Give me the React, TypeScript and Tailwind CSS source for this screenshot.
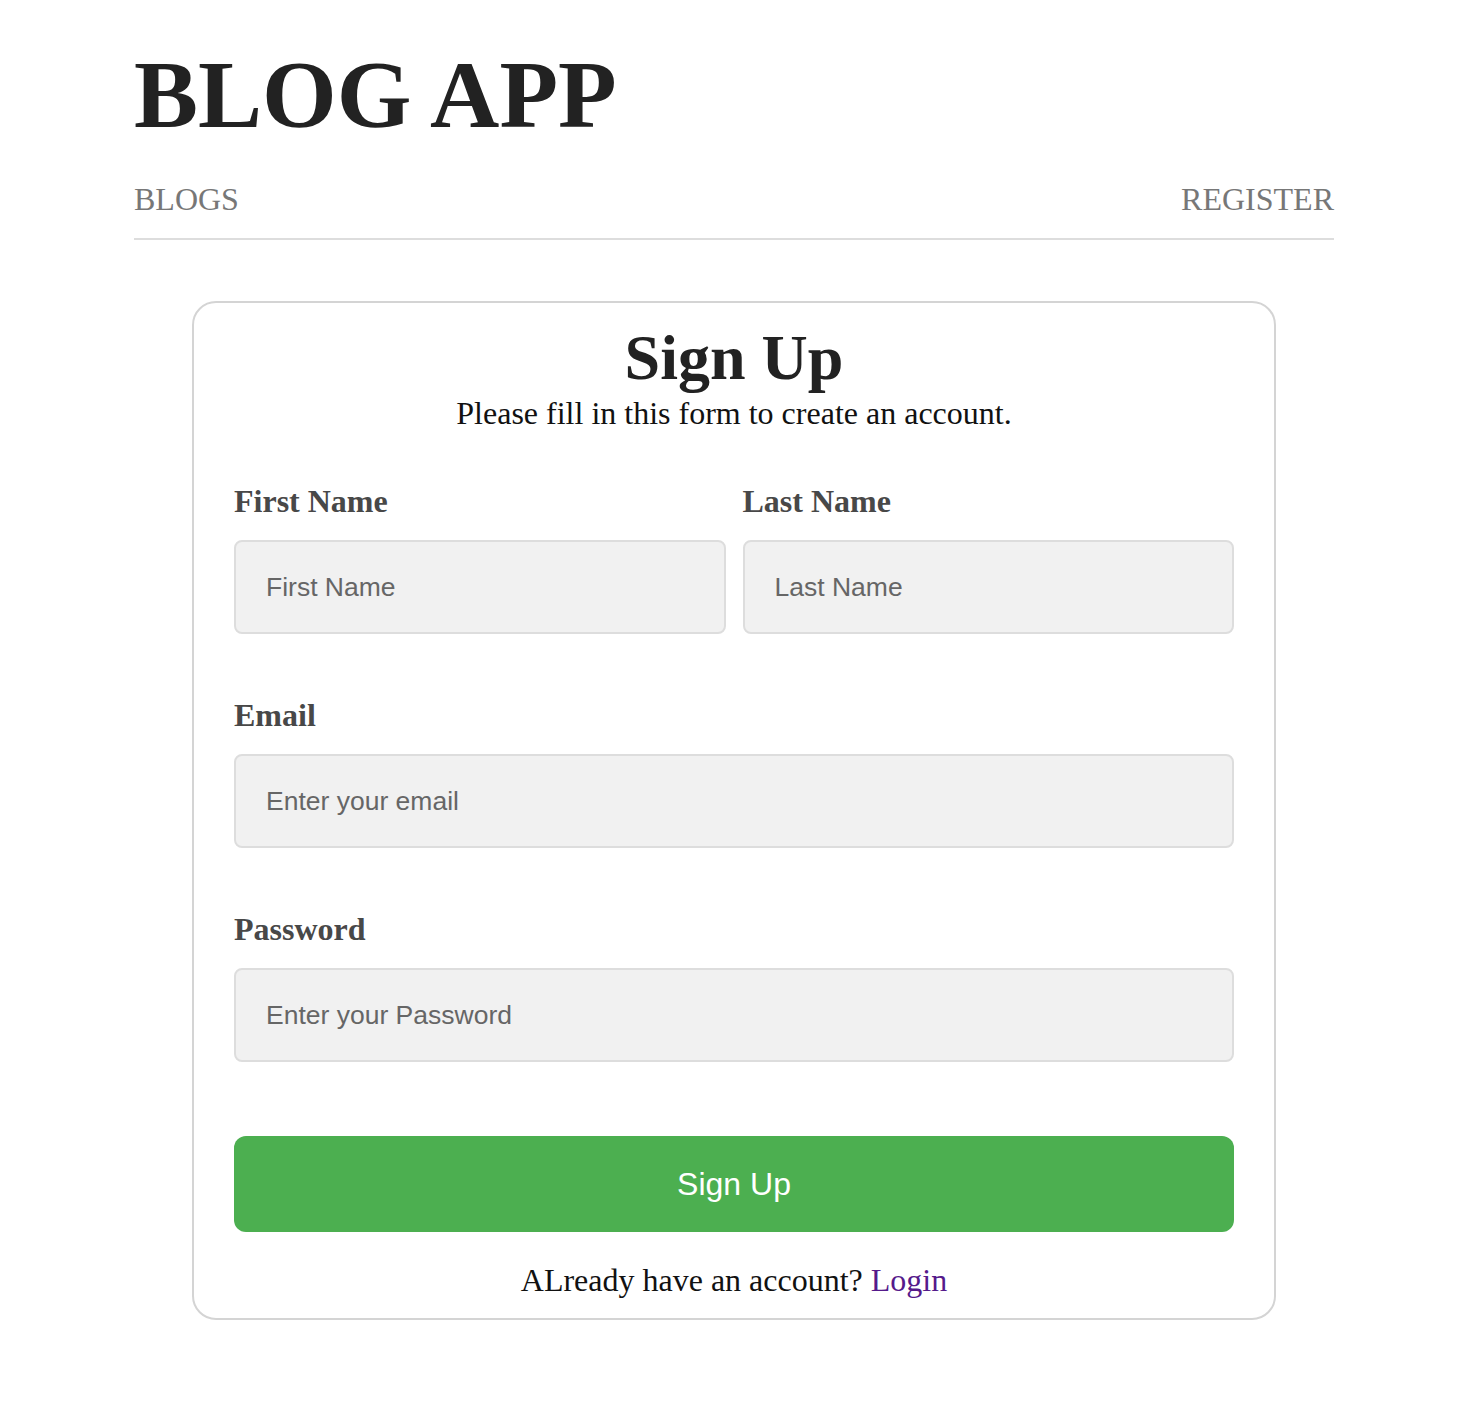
import React from "react";

const serif = "font-['Liberation_Serif','Times_New_Roman',serif]";
const sans = "font-['Liberation_Sans',Arial,sans-serif]";

function Field({ label, placeholder, type = "text" }: { label: string; placeholder: string; type?: string }) {
  return (
    <div className="flex flex-col">
      <label className={`${serif} text-[32px] leading-none font-bold text-[#484848]`}>{label}</label>
      <input
        type={type}
        placeholder={placeholder}
        className={`${sans} mt-[23px] h-[94px] w-full rounded-[8px] border-2 border-[#dddddd] bg-[#f1f1f1] px-[30px] text-[26.5px] text-[#333] placeholder:text-[#666] outline-none`}
      />
    </div>
  );
}

export default function App() {
  return (
    <div className={`min-h-screen bg-white ${serif}`}>
      <div className="mx-auto w-[1200px] pt-[47px] pb-[80px]">
        {/* Header */}
        <h1 className="text-[96px] leading-none font-bold text-[#222]">BLOG APP</h1>
        <nav className="mt-[40px] flex justify-between border-b-2 border-[#dddddd] pb-[23px] text-[32px] leading-none text-[#777]">
          <a href="#">BLOGS</a>
          <a href="#">REGISTER</a>
        </nav>

        {/* Sign up card */}
        <div className="mx-auto mt-[61px] w-[1084px] rounded-[24px] border-2 border-[#d4d4d4] px-[40px] pt-[23px] pb-[22px]">
          <div className="text-center">
            <h2 className="text-[64px] leading-none font-bold text-[#222]">Sign Up</h2>
            <p className="mt-[7px] text-[32px] leading-none text-[#111]">Please fill in this form to create an account.</p>
          </div>

          <form className="mt-[56px] flex flex-col gap-[65px]" onSubmit={e => e.preventDefault()}>
            <div className="grid grid-cols-2 gap-x-[17px]">
              <Field label="First Name" placeholder="First Name" />
              <Field label="Last Name" placeholder="Last Name" />
            </div>
            <Field label="Email" placeholder="Enter your email" type="email" />
            <Field label="Password" placeholder="Enter your Password" type="password" />
          </form>

          <button
            className={`${sans} mt-[74px] h-[96px] w-full rounded-[12px] bg-[#4caf50] text-[32px] text-white`}
          >
            Sign Up
          </button>
          <p className="mt-[32px] text-center text-[32px] leading-none text-[#111]">
            ALready have an account? <a href="#" className="text-[#551a8b]">Login</a>
          </p>
        </div>
      </div>
    </div>
  );
}
